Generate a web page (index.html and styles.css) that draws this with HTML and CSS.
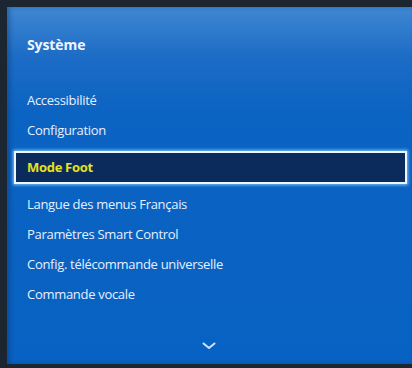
FILE: index.html
```html
<!DOCTYPE html>
<html>
<head>
  <title>Système</title>
  <link rel="stylesheet" href="styles.css">
</head>
<body>
  <div class="panel">
    <h2 class="panel-title">Système</h2>
    <ul class="menu">
      <li class="menu-item">Accessibilité</li>
      <li class="menu-item">Configuration</li>
      <li class="menu-item selected">Mode Foot</li>
      <li class="menu-item">Langue des menus Français</li>
      <li class="menu-item">Paramètres Smart Control</li>
      <li class="menu-item">Config. télécommande universelle</li>
      <li class="menu-item">Commande vocale</li>
    </ul>
    <div class="more">
      <svg width="14" height="8" viewBox="0 0 14 8">
        <path d="M1.5 1.5 L7 6 L12.5 1.5" fill="none" stroke="#cfe4ff" stroke-width="2" stroke-linecap="round" stroke-linejoin="round"/>
      </svg>
    </div>
  </div>
</body>
</html>
```

FILE: styles.css
```css
  body {
  margin: 0;
  background: #1b2631;
  font-family: 'Open Sans', 'Noto Sans', sans-serif;
  height: 368px;
  overflow: hidden;
  }

  .panel {
  margin: 7px 0 0 7px;
  height: 357px;
  display: flex;
  flex-direction: column;
  background: linear-gradient(180deg, #3f87d2 0%, #1c6cc6 14%, #0b63c2 30%, #0862c3 100%);
  box-shadow: inset 3px 0 4px rgba(10, 40, 90, 0.35);
  }

  .panel-title {
  margin: 0;
  padding: 28px 0 0 20px;
  height: 52px;
  box-sizing: border-box;
  font-size: 14px;
  font-weight: 700;
  color: #f0f6ff;
  letter-spacing: -0.1px;
  }

  .menu {
  list-style: none;
  margin: 0;
  padding: 26px 0 0 0;
  }

  .menu-item {
  height: 30px;
  line-height: 30px;
  padding-left: 20px;
  font-size: 13px;
  color: #e6f0ff;
  letter-spacing: -0.3px;
  }

  .menu-item.selected {
  margin: 6px 5px 5px 7px;
  height: 29px;
  line-height: 29px;
  padding-left: 11px;
  background: #0a2b5c;
  border: 2px solid #eef7ff;
  box-shadow: 0 0 3px 1px #7fc0ff;
  color: #e6e21c;
  font-weight: 700;
  }

  .more {
  flex: 1;
  display: flex;
  justify-content: center;
  align-items: flex-end;
  padding-bottom: 14px;
  padding-right: 2px;
  }
```
